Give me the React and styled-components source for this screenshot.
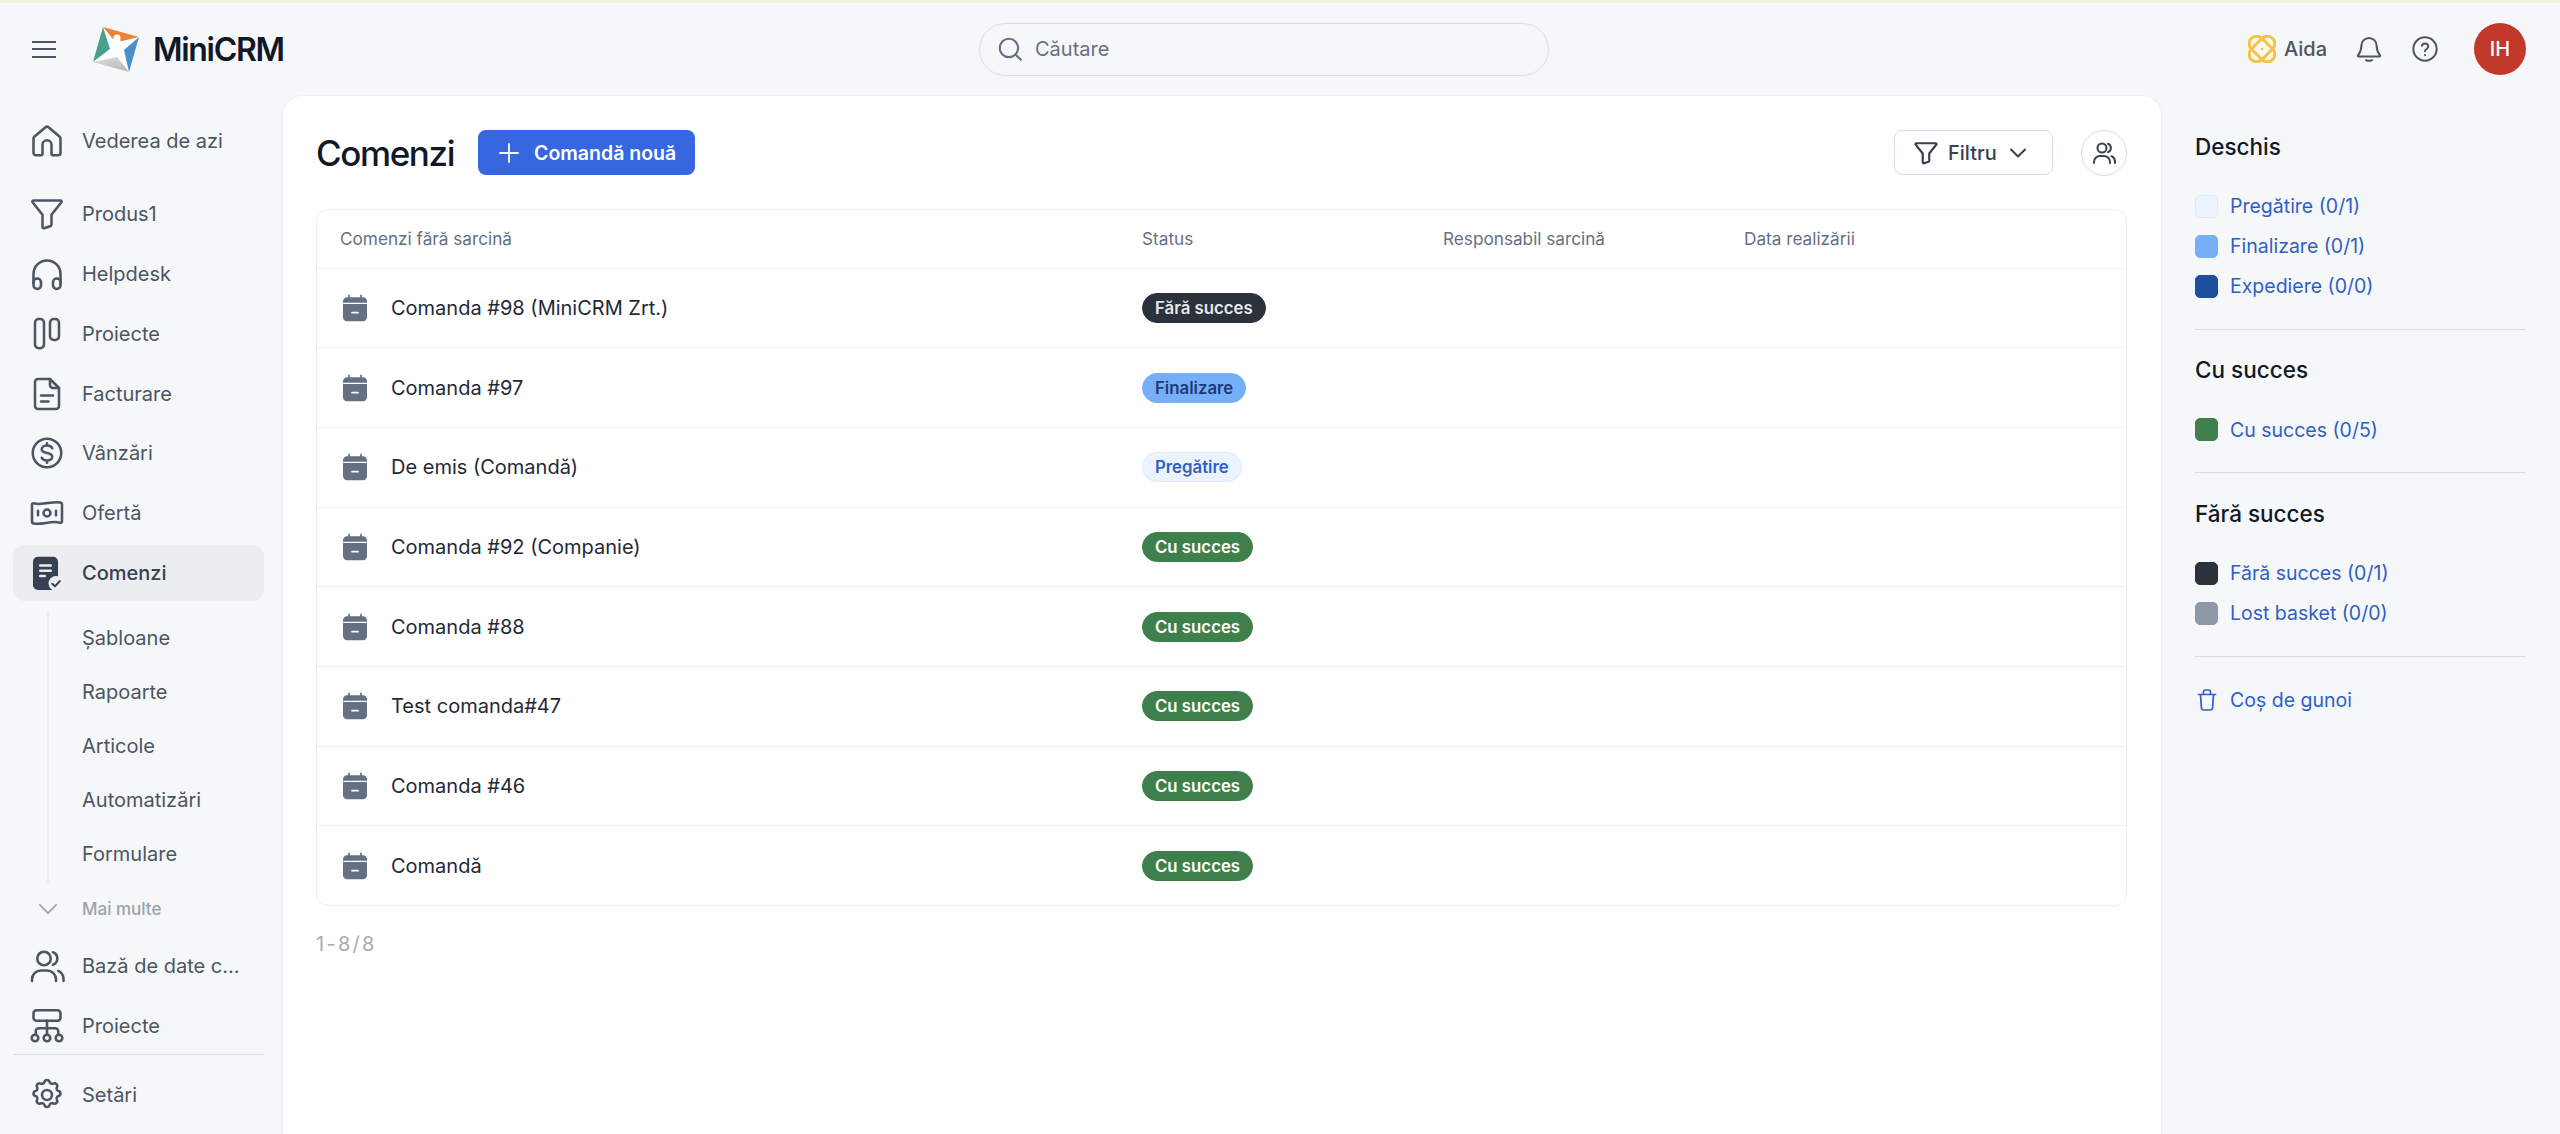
import React from 'react';
import styled, { createGlobalStyle } from 'styled-components';

const GlobalStyle = createGlobalStyle`
  * { box-sizing: border-box; }
  html, body { margin: 0; height: 100%; overflow: hidden; }
  body {
    background: #f6f7f9;
    font-family: Inter, "Liberation Sans", sans-serif;
    color: #111827;
  }
`;

// Icons
const Svg = styled.svg`
  width: ${(p) => p.$size || 36}px;
  height: ${(p) => p.$size || 36}px;
  flex: none;
  fill: none;
  stroke: currentColor;
  stroke-width: ${(p) => p.$stroke || 1.700};
  stroke-linecap: round;
  stroke-linejoin: round;
`;

const Icon = ({ size, stroke, children }) => (
  <Svg viewBox="0 0 24 24" $size={size} $stroke={stroke}>
    {children}
  </Svg>
);

const HomeIcon = () => (
  <Icon>
    <path d="M3 20V10.500c0-.6.3-1.100.7-1.500L11 2.800c.6-.5 1.400-.5 2 0L20.300 9c.4.4.7.9.7 1.500V20c0 .8-.7 1.500-1.500 1.500H16c-.6 0-1-.4-1-1V14.500a3 3 0 0 0-6 0v6c0 .6-.4 1-1 1H4.500C3.700 21.500 3 20.800 3 20z" />
  </Icon>
);
const FunnelIcon = ({ size, stroke }) => (
  <Icon size={size} stroke={stroke}>
    <path d="M3 3h18c.6 0 1 .7.6 1.200L15 12.500V19c0 .5-.2.8-.6 1L10.200 21.500c-.6.2-1.200-.2-1.200-.9v-8.100L2.400 4.200C2 3.700 2.400 3 3 3z" />
  </Icon>
);
const HeadsetIcon = () => (
  <Icon>
    <path d="M3 18v-6a9 9 0 0 1 18 0v6" />
    <rect x="3" y="15" width="5" height="7" rx="2.500" />
    <rect x="16" y="15" width="5" height="7" rx="2.500" />
  </Icon>
);
const BoardIcon = () => (
  <Icon>
    <rect x="4" y="2" width="6" height="19.500" rx="2.500" />
    <rect x="14" y="2" width="6" height="14" rx="2.500" />
  </Icon>
);
const DocIcon = () => (
  <Icon>
    <path d="M6 2h8l6 6v12c0 1.100-.9 2-2 2H6c-1.100 0-2-.9-2-2V4c0-1.100.9-2 2-2z" />
    <path d="M14 2v4c0 1.100.9 2 2 2h4M8 13h8M8 17h5" />
  </Icon>
);
const DollarIcon = () => (
  <Icon>
    <circle cx="12" cy="12" r="9.500" />
    <path d="M15.500 8.800C15 7.600 13.700 7 12 7c-2 0-3.500 1-3.500 2.500S10 11.700 12 12s3.500 1 3.500 2.500S14 17 12 17c-1.700 0-3-.6-3.500-1.800M12 5.500V7M12 17v1.500" />
  </Icon>
);
const BillIcon = () => (
  <Icon>
    <path d="M2 6.500c0-.7.6-1.200 1.200-1 5.800 1.700 11.800-1.500 17.600-.5.600.1 1.200.5 1.200 1.200v11.300c0 .7-.6 1.200-1.200 1-5.800-1.700-11.800 1.500-17.600.5-.6-.1-1.200-.5-1.200-1.200z" />
    <circle cx="12" cy="12" r="2.300" />
    <path d="M6 10.500v3M18 10.500v3" />
  </Icon>
);
const OrdersIcon = () => (
  <Icon>
    <path d="M6 2h10c1.400 0 2.500 1.100 2.500 2.500v15.500c0 1.400-1.100 2.500-2.500 2.500H6c-1.400 0-2.500-1.100-2.500-2.500V4.500C3.500 3.100 4.600 2 6 2z" fill="currentColor" />
    <path d="M7.500 7h7M7.500 10.500h7M7.500 14h3" stroke="#ecedf1" />
    <circle cx="18" cy="19" r="5" fill="#ecedf1" stroke="none" />
    <path d="M15.500 19.200l1.800 1.700 3.200-3.500" strokeWidth="1.400" />
  </Icon>
);
const PeopleIcon = ({ size, stroke }) => (
  <Icon size={size} stroke={stroke}>
    <circle cx="10" cy="7" r="4.500" />
    <path d="M2 22v-1a6 6 0 0 1 6-6h4a6 6 0 0 1 6 6v1M16 2.800a4.500 4.500 0 0 1 0 8.400M19.500 15.200A6 6 0 0 1 23 20.500V22" />
  </Icon>
);
const TreeIcon = () => (
  <Icon>
    <rect x="3" y="1.500" width="18" height="7" rx="2" />
    <path d="M12 8.500V18M4.500 17v-1.500c0-1.100.9-2 2-2h11c1.100 0 2 .9 2 2V17" />
    <circle cx="4" cy="20" r="2.200" />
    <circle cx="12" cy="20" r="2.200" />
    <circle cx="20" cy="20" r="2.200" />
  </Icon>
);
const GearIcon = () => (
  <Icon>
    <path d="M10.300 3.300c.4-1.700 3-1.700 3.400 0 .3 1.100 1.500 1.600 2.500 1.100 1.500-.9 3.300.9 2.400 2.400-.5 1 0 2.200 1.100 2.500 1.700.4 1.700 3 0 3.400-1.100.3-1.600 1.500-1.100 2.500.9 1.500-.9 3.300-2.400 2.400-1-.5-2.200 0-2.500 1.100-.4 1.700-3 1.700-3.400 0-.3-1.100-1.500-1.600-2.500-1.100-1.500.9-3.300-.9-2.400-2.400.5-1 0-2.200-1.100-2.500-1.700-.4-1.700-3 0-3.400 1.100-.3 1.600-1.500 1.100-2.500-.9-1.500.9-3.300 2.400-2.400 1 .5 2.200 0 2.500-1.100z" />
    <circle cx="12" cy="12" r="3.300" />
  </Icon>
);
const ChevronIcon = ({ size, stroke }) => (
  <Icon size={size} stroke={stroke}>
    <path d="M5 8.500l7 7 7-7" />
  </Icon>
);
const PlusIcon = () => (
  <Icon size={24} stroke={1.800}>
    <path d="M12 3v18M3 12h18" />
  </Icon>
);
const SearchIcon = () => (
  <Icon size={26} stroke={2}>
    <circle cx="11" cy="11" r="8.500" />
    <path d="M17.500 17.500L22 22" />
  </Icon>
);
const BellIcon = () => (
  <Icon size={28} stroke={1.700}>
    <path d="M12 2.500a6.500 6.500 0 0 0-6.500 6.500c0 5.500-2.500 7.500-3 8.500-.2.500.1 1 .7 1h17.600c.6 0 .9-.5.7-1-.5-1-3-3-3-8.500A6.500 6.500 0 0 0 12 2.500zM9.500 21.500c1.200.8 3.800.8 5 0" />
  </Icon>
);
const HelpIcon = () => (
  <Icon size={28} stroke={1.700}>
    <circle cx="12" cy="12" r="10" />
    <path d="M9.300 9.300A2.800 2.800 0 0 1 12 7.200c1.600 0 2.800 1.100 2.800 2.500 0 2.200-2.800 2.300-2.800 4.300M12 17.200v.1" />
  </Icon>
);
const TrashIcon = () => (
  <Icon size={24} stroke={1.700}>
    <path d="M3.500 6.500h17M8.500 6.500V4c0-1.100.9-2 2-2h3c1.100 0 2 .9 2 2v2.500M5.500 6.500l.9 13.300c.1 1.200 1 2.200 2.200 2.200h6.800c1.200 0 2.100-1 2.200-2.200l.9-13.300" />
  </Icon>
);
const CalendarIcon = () => (
  <Svg viewBox="0 0 24 24" $size={32} $stroke={2}>
    <path d="M3 7c0-1.700 1.300-3 3-3h12c1.700 0 3 1.300 3 3v12c0 1.700-1.300 3-3 3H6c-1.700 0-3-1.300-3-3z" fill="#667085" stroke="none" />
    <path d="M3.500 8.500h17" stroke="#fff" strokeWidth="1" />
    <path d="M7.500 2.500v3.500M16.500 2.500v3.500" stroke="#667085" strokeWidth="1.300" />
    <path d="M9.800 15.500h4.400" stroke="#fff" strokeWidth="1.400" />
  </Svg>
);
const AidaGlyph = styled(Svg)`
  color: #f5c443;
`;
const AidaIcon = () => (
  <AidaGlyph viewBox="0 0 28 28" $size={28} $stroke={3}>
    <rect x="-1" y="6.500" width="30" height="15" rx="7.500" transform="rotate(45 14 14)" />
    <rect x="-1" y="6.500" width="30" height="15" rx="7.500" transform="rotate(-45 14 14)" />
    <circle cx="14" cy="14" r="1.200" fill="currentColor" stroke="none" />
  </AidaGlyph>
);
const LogoMark = () => (
  <LogoSvg viewBox="0 0 47 46">
    <defs>
      <linearGradient id="logoGray" x1="0" y1="0" x2="0.300" y2="1">
        <stop offset="0" stopColor="#f4f4f4" />
        <stop offset="1" stopColor="#bdbdbd" />
      </linearGradient>
    </defs>
    <polygon points="10,1 46,11 24,20" fill="#ee8336" />
    <polygon points="46,11 36,46 24,20" fill="#4a90cf" />
    <polygon points="36,46 0,36 24,20" fill="url(#logoGray)" />
    <polygon points="0,36 10,1 24,20" fill="#4ba08c" />
    <polygon points="10,1 20,13 29,15 46,11 31,24 36,46 24,31 0,36 17,23" fill="#fff" />
    <circle cx="24" cy="12" r="3.500" fill="#fff" />
  </LogoSvg>
);

// Layout
const Page = styled.div`
  height: 100vh;
  display: flex;
  flex-direction: column;
  border-top: 3px solid #f0f3df;
`;

const TopBar = styled.header`
  height: 92px;
  flex: none;
  display: grid;
  grid-template-columns: 979px 570px 1fr;
  align-items: center;
`;

const BarLeft = styled.div`
  display: flex;
  align-items: center;
  padding-left: 32px;
`;

const BurgerIcon = styled.span`
  width: 24px;
  height: 17px;
  flex: none;
  margin-right: 37px;
  border-top: 2px solid #4b5563;
  border-bottom: 2px solid #4b5563;
  position: relative;
  &::after {
    content: '';
    position: absolute;
    left: 0;
    right: 0;
    top: 5.500px;
    height: 2px;
    background: #4b5563;
  }
`;

const LogoSvg = styled.svg`
  width: 47px;
  height: 46px;
  flex: none;
`;

const LogoText = styled.span`
  margin-left: 13px;
  font-size: 32px;
  font-weight: 600;
  letter-spacing: -1.300px;
  color: #111827;
`;

const SearchBox = styled.div`
  height: 53px;
  border: 1px solid #d9dce3;
  border-radius: 27px;
  display: flex;
  align-items: center;
  gap: 12px;
  padding-left: 17px;
  color: #667085;
  font-size: 20px;
`;

const BarRight = styled.div`
  display: flex;
  align-items: center;
  justify-content: flex-end;
  padding-right: 34px;
  color: #4b5563;
`;

const AidaLabel = styled.span`
  margin-left: 8px;
  margin-right: 28px;
  font-size: 20px;
  font-weight: 500;
`;

const HelpSlot = styled.span`
  display: flex;
  margin-left: 28px;
  margin-right: 35px;
`;

const Avatar = styled.span`
  width: 52px;
  height: 52px;
  border-radius: 50%;
  background: #c0392b;
  color: #fff;
  display: flex;
  align-items: center;
  justify-content: center;
  font-size: 20px;
  font-weight: 500;
`;

const Body = styled.div`
  flex: 1;
  min-height: 0;
  display: flex;
`;

// Sidebar
const Sidebar = styled.nav`
  width: 282px;
  flex: none;
  padding: 18px 18px 0 13px;
  display: flex;
  flex-direction: column;
  gap: 3.800px;
`;

const NavItem = styled.div`
  height: 56px;
  flex: none;
  display: flex;
  align-items: center;
  gap: 17px;
  padding-left: 16px;
  border-radius: 12px;
  font-size: 20px;
  color: ${(p) => (p.$active ? '#374151' : '#4b5563')};
  font-weight: ${(p) => (p.$active ? 500 : 400)};
  background: ${(p) => (p.$active ? '#ecedf1' : 'transparent')};
  margin-bottom: ${(p) => p.$after || 0}px;
`;

const SubList = styled.div`
  margin: 6px 0 0 34px;
  padding-bottom: 2px;
  border-left: 2px solid #ecedf1;
`;

const SubItem = styled.div`
  height: 54px;
  display: flex;
  align-items: center;
  padding-left: 33px;
  font-size: 20px;
  color: #4b5563;
`;

const MoreRow = styled.div`
  height: 44px;
  flex: none;
  margin-bottom: 4px;
  display: flex;
  align-items: center;
  gap: 20px;
  padding-left: 21px;
  font-size: 17px;
  font-weight: 500;
  color: #9ca3af;
`;

const NavRule = styled.hr`
  margin: -4px 0 8px;
  border: 0;
  border-top: 1px solid #d9dce6;
  width: 100%;
`;

// Main card
const Card = styled.main`
  width: 1880px;
  flex: none;
  background: #fff;
  border-radius: 20px 20px 0 0;
  border: 1px solid #eff0f3;
  border-bottom: 0;
  padding: 34px 34px 0 33px;
`;

const CardHead = styled.div`
  display: flex;
  align-items: center;
  height: 45px;
`;

const Title = styled.h1`
  margin: 0 24px 0 0;
  font-size: 35px;
  font-weight: 500;
  letter-spacing: -1.400px;
  color: #111827;
`;

const NewButton = styled.button`
  height: 45px;
  width: 217px;
  display: flex;
  align-items: center;
  justify-content: center;
  gap: 13px;
  border: 0;
  border-radius: 8px;
  background: #3667e0;
  color: #fff;
  font: 600 19.500px Inter, sans-serif;
`;

const FilterButton = styled.button`
  margin-left: auto;
  height: 45px;
  width: 159px;
  display: flex;
  align-items: center;
  gap: 9px;
  padding: 0 18px;
  background: #fff;
  border: 1px solid #d9dce6;
  border-radius: 8px;
  color: #374151;
  font: 500 20px Inter, sans-serif;
`;

const RoundButton = styled.button`
  margin-left: 28px;
  width: 46px;
  height: 46px;
  padding: 0;
  display: flex;
  align-items: center;
  justify-content: center;
  background: #fff;
  border: 1px solid #d9dce6;
  border-radius: 50%;
  color: #374151;
`;

const Table = styled.div`
  margin-top: 34px;
  border: 1px solid #eceef1;
  border-radius: 12px;
`;

const HeadRow = styled.div`
  height: 57.500px;
  display: grid;
  grid-template-columns: 802px 301px 301px 1fr;
  align-items: center;
  padding-left: 23px;
  font-size: 17.200px;
  color: #667085;
`;

const Row = styled.div`
  height: 79.700px;
  display: grid;
  grid-template-columns: 803px 1fr;
  align-items: center;
  padding-left: 22px;
  border-top: 1px solid #eceef1;
`;

const RowName = styled.div`
  display: flex;
  align-items: center;
  gap: 20px;
  font-size: 20px;
  color: #1f2937;
`;

const Badge = styled.span`
  justify-self: start;
  height: 30px;
  padding: 0 12px;
  display: flex;
  align-items: center;
  border-radius: 15px;
  font-size: 16.800px;
  font-weight: 600;
  background: ${(p) => p.$bg};
  color: ${(p) => p.$fg};
  border: 1px solid ${(p) => p.$line || p.$bg};
`;

const Pager = styled.div`
  margin-top: 26px;
  font-size: 20px;
  letter-spacing: 2.300px;
  color: #a9abae;
`;

// Right panel
const Aside = styled.aside`
  flex: 1;
  padding: 34px 34px 0 33px;
`;

const GroupTitle = styled.h3`
  margin: 0 0 23px;
  height: 34px;
  display: flex;
  align-items: center;
  font-size: 22.500px;
  font-weight: 500;
  color: #111827;
`;

const StateRow = styled.div`
  height: 40px;
  display: flex;
  align-items: center;
  gap: ${(p) => p.$gap || 12}px;
  font-size: 19.500px;
  color: #2f5fc4;
`;

const Swatch = styled.span`
  width: 23px;
  height: 23px;
  border-radius: 5px;
  background: ${(p) => p.$color};
  border: 1px solid ${(p) => p.$line || p.$color};
  flex: none;
`;

const AsideRule = styled.hr`
  margin: 22.700px 0 23px;
  border: 0;
  border-top: 1px solid #d9dce6;
`;

const navTop = [
  { label: 'Produs1', icon: <FunnelIcon /> },
  { label: 'Helpdesk', icon: <HeadsetIcon /> },
  { label: 'Proiecte', icon: <BoardIcon /> },
  { label: 'Facturare', icon: <DocIcon /> },
  { label: 'Vânzări', icon: <DollarIcon /> },
  { label: 'Ofertă', icon: <BillIcon /> },
];

const subItems = ['Șabloane', 'Rapoarte', 'Articole', 'Automatizări', 'Formulare'];

const statuses = {
  prep: { text: 'Pregătire', bg: '#ebf3fe', fg: '#2f5fc4', line: '#e1e9f6' },
  final: { text: 'Finalizare', bg: '#76aef8', fg: '#1e3a78' },
  won: { text: 'Cu succes', bg: '#3f7f4b', fg: '#fff' },
  lost: { text: 'Fără succes', bg: '#2b323b', fg: '#e5e7eb' },
};

const orders = [
  { name: 'Comanda #98 (MiniCRM Zrt.)', status: 'lost' },
  { name: 'Comanda #97', status: 'final' },
  { name: 'De emis (Comandă)', status: 'prep' },
  { name: 'Comanda #92 (Companie)', status: 'won' },
  { name: 'Comanda #88', status: 'won' },
  { name: 'Test comanda#47', status: 'won' },
  { name: 'Comanda #46', status: 'won' },
  { name: 'Comandă', status: 'won' },
];

const groups = [
  {
    title: 'Deschis',
    items: [
      { label: 'Pregătire (0/1)', color: '#ebf3fe', line: '#e1e9f6' },
      { label: 'Finalizare (0/1)', color: '#76aef8' },
      { label: 'Expediere (0/0)', color: '#1e4f9c' },
    ],
  },
  { title: 'Cu succes', items: [{ label: 'Cu succes (0/5)', color: '#3f7f4b' }] },
  {
    title: 'Fără succes',
    items: [
      { label: 'Fără succes (0/1)', color: '#2b323b' },
      { label: 'Lost basket (0/0)', color: '#8e99a8' },
    ],
  },
];

const App = () => (
  <Page>
    <GlobalStyle />
    <TopBar>
      <BarLeft>
        <BurgerIcon />
        <LogoMark />
        <LogoText>MiniCRM</LogoText>
      </BarLeft>
      <SearchBox>
        <SearchIcon />
        Căutare
      </SearchBox>
      <BarRight>
        <AidaIcon />
        <AidaLabel>Aida</AidaLabel>
        <BellIcon />
        <HelpSlot>
          <HelpIcon />
        </HelpSlot>
        <Avatar>IH</Avatar>
      </BarRight>
    </TopBar>
    <Body>
      <Sidebar>
        <NavItem $after={13.400}>
          <HomeIcon />
          Vederea de azi
        </NavItem>
        {navTop.map((item) => (
          <NavItem key={item.label}>
            {item.icon}
            {item.label}
          </NavItem>
        ))}
        <NavItem $active>
          <OrdersIcon />
          Comenzi
        </NavItem>
        <SubList>
          {subItems.map((label) => (
            <SubItem key={label}>{label}</SubItem>
          ))}
        </SubList>
        <MoreRow>
          <ChevronIcon size={28} stroke={1.500} />
          Mai multe
        </MoreRow>
        <NavItem>
          <PeopleIcon />
          Bază de date c...
        </NavItem>
        <NavItem>
          <TreeIcon />
          Proiecte
        </NavItem>
        <NavRule />
        <NavItem>
          <GearIcon />
          Setări
        </NavItem>
      </Sidebar>
      <Card>
        <CardHead>
          <Title>Comenzi</Title>
          <NewButton>
            <PlusIcon />
            Comandă nouă
          </NewButton>
          <FilterButton>
            <FunnelIcon size={26} stroke={2} />
            Filtru
            <ChevronIcon size={24} stroke={2} />
          </FilterButton>
          <RoundButton>
            <PeopleIcon size={24} stroke={2} />
          </RoundButton>
        </CardHead>
        <Table>
          <HeadRow>
            <span>Comenzi fără sarcină</span>
            <span>Status</span>
            <span>Responsabil sarcină</span>
            <span>Data realizării</span>
          </HeadRow>
          {orders.map((order) => {
            const status = statuses[order.status];
            return (
              <Row key={order.name}>
                <RowName>
                  <CalendarIcon />
                  {order.name}
                </RowName>
                <Badge $bg={status.bg} $fg={status.fg} $line={status.line}>
                  {status.text}
                </Badge>
              </Row>
            );
          })}
        </Table>
        <Pager>1-8/8</Pager>
      </Card>
      <Aside>
        {groups.map((group) => (
          <React.Fragment key={group.title}>
            <GroupTitle>{group.title}</GroupTitle>
            {group.items.map((item) => (
              <StateRow key={item.label}>
                <Swatch $color={item.color} $line={item.line} />
                {item.label}
              </StateRow>
            ))}
            <AsideRule />
          </React.Fragment>
        ))}
        <StateRow $gap={11}>
          <TrashIcon />
          Coș de gunoi
        </StateRow>
      </Aside>
    </Body>
  </Page>
);

export default App;
